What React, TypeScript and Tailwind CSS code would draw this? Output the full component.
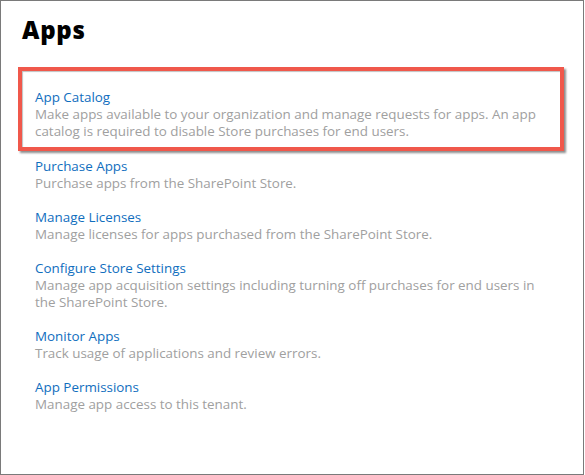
import React from "react";

interface AppLink {
  title: string;
  lines: string[];
}

const catalog: AppLink = {
  title: "App Catalog",
  lines: [
    "Make apps available to your organization and manage requests for apps. An app",
    "catalog is required to disable Store purchases for end users.",
  ],
};

const links: AppLink[] = [
  { title: "Purchase Apps", lines: ["Purchase apps from the SharePoint Store."] },
  { title: "Manage Licenses", lines: ["Manage licenses for apps purchased from the SharePoint Store."] },
  {
    title: "Configure Store Settings",
    lines: [
      "Manage app acquisition settings including turning off purchases for end users in",
      "the SharePoint Store.",
    ],
  },
  { title: "Monitor Apps", lines: ["Track usage of applications and review errors."] },
  { title: "App Permissions", lines: ["Manage app access to this tenant."] },
];

function LinkItem({ item }: { item: AppLink }) {
  return (
    <div className="text-[13.4px] leading-[17px]">
      <a href="#" className="block text-[#106ebe]">
        {item.title}
      </a>
      {item.lines.map((line) => (
        <p key={line} className="whitespace-nowrap text-[#a0a0a0]">
          {line}
        </p>
      ))}
    </div>
  );
}

export default function App() {
  return (
    <div
      className="h-[475px] w-[584px] border border-[#7a7a7a] bg-white"
      style={{ fontFamily: '"Open Sans", "Noto Sans", sans-serif' }}
    >
      <h1 className="ml-[21px] mt-[13px] text-[24px] font-extrabold leading-[32px] tracking-[0.03em] text-black">
        Apps
      </h1>

      <div className="ml-[17px] mt-[21px] w-[546px] border-4 border-[#f0584b] pb-[7px] pl-[13px] pt-[18px] shadow-[2px_2px_2px_rgba(0,0,0,0.45),inset_1px_1px_1px_rgba(0,0,0,0.25)]">
        <LinkItem item={catalog} />
      </div>

      <div className="ml-[34px] mt-[7px] flex flex-col gap-[17px]">
        {links.map((item) => (
          <LinkItem key={item.title} item={item} />
        ))}
      </div>
    </div>
  );
}
